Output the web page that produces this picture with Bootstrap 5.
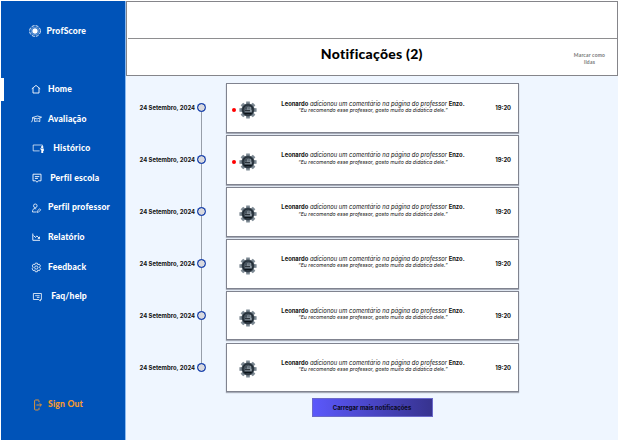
<!DOCTYPE html>
<html lang="pt-BR">
<head>
<meta charset="utf-8">
<meta name="viewport" content="width=device-width, initial-scale=1">
<title>ProfScore</title>
<link href="https://cdn.jsdelivr.net/npm/bootstrap@5.3.0/dist/css/bootstrap.min.css" rel="stylesheet">
<style>
body{width:620px;height:443px;overflow:hidden;background:#fff;font-family:Inter,"Open Sans",sans-serif;color:#111;line-height:1}
.app{width:618px;height:439.5px;padding:1px 0 0 1px}
.side{width:124.5px;background:#0053b8;color:#fff;font:900 8.6px/1 Lato,sans-serif;letter-spacing:.19px}
.side svg{fill:none;stroke:#fff;stroke-width:1;overflow:visible}
.brand-row{height:60px;padding-left:28px}
.brand-row span{margin-left:5.5px;font-size:8.6px}
.side .item{height:29.65px;color:#fff;padding-left:29.5px;position:relative}
.side .item .ico{width:17.5px;flex:none;display:flex}
.side .item .ico-xl{width:22.8px}
.side .item .ico-md{width:19.7px}
.side .item .ico-lg{width:20.7px}
.side .item.current::before{content:"";position:absolute;left:-1px;top:3.5px;width:3.5px;height:23px;background:#fff}
.menu{padding-top:13.4px}
.signout{color:#f79a2c;padding:87px 0 0 32px}
.signout svg{stroke:#f79a2c;margin-right:6px}
.main-area{background:#eff6ff;border-left:1px solid #8dbbf0}
.head{background:#fff;border:1px solid #85858a;height:74.5px;width:492.5px}
.head .upper{height:37px;border-bottom:1px solid #8e8e90;margin-left:1px}
.head .lower{height:35.5px;position:relative}
.head h1{font:900 14px/1 Lato,sans-serif;letter-spacing:.25px;color:#000;margin:0 0 5px;}
.mark-read{position:absolute;right:6.5px;top:13px;width:42px;font:700 5px/7px Lato,sans-serif;letter-spacing:.2px;color:#777;text-align:center}
.feed{padding-top:7.7px;position:relative}
.feed::before{content:"";position:absolute;left:75.2px;top:32px;height:259px;width:1px;background:#979ea9}
.entry{height:51.9px}
.when{width:69.5px;font-size:5.9px;font-weight:700;text-align:right;white-space:nowrap;padding-top:22.3px;color:#111}
.knot{width:9px;height:9px;border-radius:50%;background:radial-gradient(circle,#d9d9de 2.9px,#2148ae 3.4px);margin:20.3px 20px 0 1.5px;flex:none;position:relative}
.note{width:293px;height:49.7px;background:#fff;border:1px solid #80838f;box-shadow:0 1px 1px #a7acb8;padding-left:5px}
.unread{width:4px;height:4px;border-radius:50%;margin-top:3.5px;flex:none}
.unread.on{background:#f00}
.gear{margin:4px 0 0 3.5px;flex:none}
.msg{width:205px;margin-left:13.5px;padding-bottom:2.6px;text-align:center;font-size:5.85px;line-height:7.2px;white-space:nowrap;font-style:italic}
.msg b{font-style:normal;font-weight:700}
.quote{font-size:5.1px}
.hour{font-size:5.8px;font-weight:700;margin-left:auto;margin-right:6.5px}
.more{width:121px;height:19px;margin:3.3px 0 0 186px;border-radius:0;padding:0;font-size:5.95px;font-weight:700;color:#0a0a20;background:linear-gradient(90deg,#5b58fb,#37338f);border:1px solid #6b69c9;line-height:1;display:block}
.more span{position:relative;top:.6px}
</style>
<script src="https://cdn.jsdelivr.net/npm/bootstrap@5.3.0/dist/js/bootstrap.bundle.min.js"></script>
</head>
<body>
<svg width="0" height="0" class="position-absolute">
<symbol id="gear" viewBox="0 0 18 18">
<g fill="#7d8993"><path d="M7 4 7.2.4h3.6L11 4v10l-.2 3.6H7.2L7 14z"/><path d="M7 4 7.2.4h3.6L11 4v10l-.2 3.6H7.2L7 14z" transform="rotate(45 9 9)"/><path d="M7 4 7.2.4h3.6L11 4v10l-.2 3.6H7.2L7 14z" transform="rotate(90 9 9)"/><path d="M7 4 7.2.4h3.6L11 4v10l-.2 3.6H7.2L7 14z" transform="rotate(135 9 9)"/></g>
<circle cx="9" cy="9" r="6.4" fill="#3c4852"/><circle cx="9" cy="9" r="5.6" fill="#1d2730"/><circle cx="9" cy="9" r="4.5" fill="#46525c"/>
<path d="M6 8.7h2.3V6.4l1.2-.9v3h1V6h1.4v2.7h.8v2.6H6z" fill="#929da6"/><path d="M6 9.8h5M5.5 12.4h7" stroke="#0b1218" stroke-width="1.1"/>
</symbol>
</svg>
<div class="app d-flex">
<nav class="side d-flex flex-column">
<div class="brand-row d-flex align-items-center"><svg width="12" height="12" viewBox="0 0 12 12"><circle cx="6" cy="6" r="5.4" stroke-dasharray="3.1 1.14" stroke-width=".9"/><circle cx="6" cy="6" r="3.9" stroke-width=".6" stroke-opacity=".7"/><circle cx="6" cy="6" r="2.7" fill="#fff" stroke="none"/></svg><span>ProfScore</span></div>
<div class="menu d-flex flex-column">
<a class="item current d-flex align-items-center text-decoration-none"><span class="ico"><svg width="10" height="10" viewBox="0 0 10 10"><path d="M.8 4.8 5 1.4l4.2 3.4M2 4v5h6V4" stroke-width=".9"/></svg></span><span>Home</span></a>
<a class="item d-flex align-items-center text-decoration-none"><span class="ico"><svg width="11" height="10" viewBox="0 0 11 10"><path d="M1.4 3.6 6.4 2l4.2 1.2L6 5zM3.6 4.4v3.2c2-.8 3.4-.8 5.2 0V4.2M1.6 3.8v2L.5 8.2" stroke-width=".8"/></svg></span><span>Avaliação</span></a>
<a class="item d-flex align-items-center text-decoration-none"><span class="ico ico-xl"><svg width="14" height="10" viewBox="0 0 14 10"><path d="M8.6 7.9H2.2V2h9.2v1.2" stroke-width=".7"/><circle cx="11.2" cy="4.1" r="1.2" fill="#fff" stroke="none"/><path d="M8.8 5.5h4V8h-.6v2h-1.9V7.2z" fill="#fff" stroke="none"/></svg></span><span>Histórico</span></a>
<a class="item d-flex align-items-center text-decoration-none"><span class="ico ico-md"><svg width="12" height="10" viewBox="0 0 12 10"><path d="M2 1.2h8v6.6H7.5L6 9.2 4.5 7.8H2zM3.9 3.6h4.4M3.9 5.4h3" stroke-width=".9"/></svg></span><span>Perfil escola</span></a>
<a class="item d-flex align-items-center text-decoration-none"><span class="ico"><svg width="11" height="10" viewBox="0 0 11 10"><circle cx="4.3" cy="2.8" r="1.8" stroke-width=".8"/><path d="M5.5 9H1.5c0-2.3.8-3.5 2.6-3.5L5.2 6M6.2 8.2l2.4-2.4 1.1 1.1-2.4 2.4H6.2z" stroke-width=".8"/></svg></span><span>Perfil professor</span></a>
<a class="item d-flex align-items-center text-decoration-none"><span class="ico"><svg width="10" height="10" viewBox="0 0 10 10"><path d="M1.8 1.5v6.8H9M2.5 3.5l2 2 1.3-1.6 2.6 2.5M8.5 4.7v1.7H6.8" stroke-width=".9"/></svg></span><span>Relatório</span></a>
<a class="item d-flex align-items-center text-decoration-none"><span class="ico"><svg width="11" height="11" viewBox="1.4 0 8.6 9.6"><path d="M4.7 1h1.7l.4 1.3 1.5-.3.9 1.5-1 1 1 1.4-.9 1.6-1.5-.4-.4 1.4H4.7l-.5-1.4-1.4.4-.9-1.6 1-1.4-1-1L2.8 2l1.4.3z" stroke-width=".7"/><circle cx="5.5" cy="4.8" r="1.4" stroke-width=".7"/></svg></span><span>Feedback</span></a>
<a class="item d-flex align-items-center text-decoration-none"><span class="ico ico-lg"><svg width="12" height="10" viewBox="0 0 12 10"><path d="M2.4 1.5h8v6h-1v1.6L7.8 7.5H2.4zM4.2 3.7h4.4M5.9 5.4h2.6" stroke-width=".8"/></svg></span><span>Faq/help</span></a>
</div>
<div class="signout d-flex align-items-center"><svg width="9" height="12" viewBox="0 0 9 12"><path d="M6 3.2V1.6L5.4 1H2.2l-.6.6v8.8l.6.6h3.2l.6-.6V8.8M3.4 6h5M6.7 4.3 8.4 6 6.7 7.7" stroke-width=".9"/></svg><span>Sign Out</span></div>
</nav>
<main class="main-area flex-grow-1">
<header class="head"><div class="upper"></div><div class="lower d-flex align-items-center justify-content-center"><h1>Notificações (2)</h1><div class="mark-read">Marcar como lidas</div></div></header>
<section class="feed" id="feed"></section>
<button class="btn more"><span>Carregar mais notificações</span></button>
</main>
</div>
<script>
document.getElementById('feed').innerHTML=[1,1,0,0,0,0].map(on=>`<article class="entry d-flex"><div class="when"><span>24 Setembro, 2024</span></div><i class="knot"></i><div class="note d-flex align-items-center"><i class="unread ${on?'on':''}"></i><svg class="gear" width="18" height="18"><use href="#gear"/></svg><div class="msg"><div><b>Leonardo</b> adicionou um comentário na página do professor <b>Enzo.</b></div><div class="quote">“Eu recomendo esse professor, gosto muito da didática dele.”</div></div><span class="hour">19:20</span></div></article>`).join('');
</script>
</body>
</html>
